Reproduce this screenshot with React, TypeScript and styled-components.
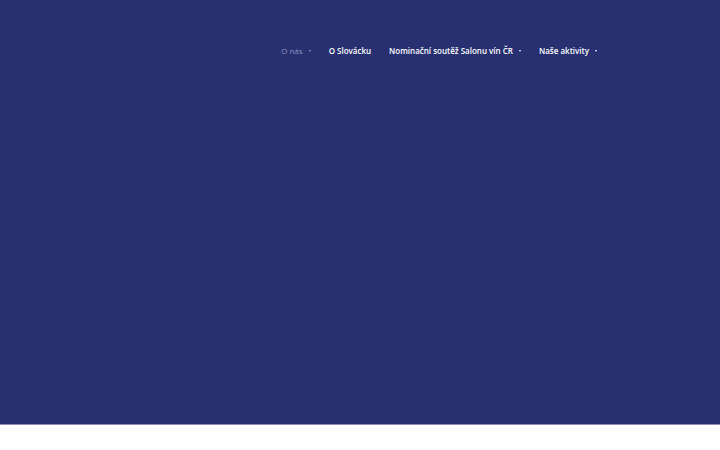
import { createGlobalStyle } from 'styled-components';
import styled from 'styled-components';

const GlobalStyle = createGlobalStyle`
  html, body {
    margin: 0;
    padding: 0;
    background: #ffffff;
    font-family: 'Open Sans', 'Noto Sans', sans-serif;
  }
`;

const Hero = styled.header`
  height: 424px;
  background: #283071;
  border-bottom: 1px solid #8c8fb4;
`;

const Nav = styled.nav`
  display: flex;
  justify-content: flex-end;
  padding: 43px 123px 0 0;
`;

const Menu = styled.ul`
  display: flex;
  align-items: center;
  gap: 18px;
  margin: 0;
  padding: 0;
  list-style: none;
`;

const Item = styled.li<{ $active?: boolean }>`
  display: flex;
  align-items: center;
  gap: 6px;
  font-size: 8px;
  line-height: 15px;
  color: ${({ $active }) => ($active ? '#8d91bd' : '#ffffff')};
  font-weight: ${({ $active }) => ($active ? 400 : 600)};
  white-space: nowrap;
`;

const Caret = styled.span`
  width: 0;
  height: 0;
  border-left: 1.5px solid transparent;
  border-right: 1.5px solid transparent;
  border-top: 2px solid currentColor;
`;

const items = [
  { label: 'O nás', sub: true, active: true },
  { label: 'O Slovácku', sub: false },
  { label: 'Nominační soutěž Salonu vín ČR', sub: true },
  { label: 'Naše aktivity', sub: true },
];

export default function App() {
  return (
    <>
      <GlobalStyle />
      <Hero>
        <Nav>
          <Menu>
            {items.map((it) => (
              <Item key={it.label} $active={it.active}>
                {it.label}
                {it.sub && <Caret />}
              </Item>
            ))}
          </Menu>
        </Nav>
      </Hero>
    </>
  );
}
